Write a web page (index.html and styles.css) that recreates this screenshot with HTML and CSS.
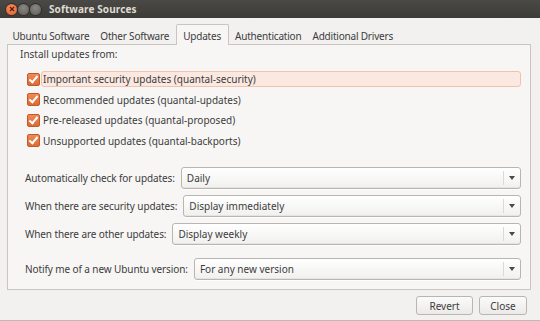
FILE: index.html
```html
<!DOCTYPE html>
<html lang="en">
<head>
<meta charset="UTF-8">
<title>Software Sources</title>
<link rel="stylesheet" href="styles.css">
</head>
<body>

<div class="window">
	<div class="titlebar">
		<div class="wm-buttons">
			<span class="wm-btn wm-close">
				<svg width="6" height="6" viewBox="0 0 6 6"><path d="M1 1L5 5M5 1L1 5" stroke="#5a1a08" stroke-width="1.3"/></svg>
			</span>
			<span class="wm-btn wm-min"></span>
			<span class="wm-btn wm-max"></span>
		</div>
		<div class="title">Software Sources</div>
	</div>

	<div class="tabs">
		<div class="tab">Ubuntu Software</div>
		<div class="tab">Other Software</div>
		<div class="tab active">Updates</div>
		<div class="tab">Authentication</div>
		<div class="tab">Additional Drivers</div>
	</div>

	<div class="panel">
		<div class="section-title">Install updates from:</div>
		<div class="checks">
			<div class="check focus"><span class="box"></span><span class="check-label">Important security updates (quantal-security)</span></div>
			<div class="check"><span class="box"></span><span class="check-label">Recommended updates (quantal-updates)</span></div>
			<div class="check"><span class="box"></span><span class="check-label">Pre-released updates (quantal-proposed)</span></div>
			<div class="check"><span class="box"></span><span class="check-label">Unsupported updates (quantal-backports)</span></div>
		</div>

		<div class="options">
			<div class="option">
				<span class="option-label">Automatically check for updates:</span>
				<div class="combo"><span class="combo-value">Daily</span><span class="combo-arrow"></span></div>
			</div>
			<div class="option">
				<span class="option-label">When there are security updates:</span>
				<div class="combo"><span class="combo-value">Display immediately</span><span class="combo-arrow"></span></div>
			</div>
			<div class="option">
				<span class="option-label">When there are other updates:</span>
				<div class="combo"><span class="combo-value">Display weekly</span><span class="combo-arrow"></span></div>
			</div>
		</div>

		<div class="option notify">
			<span class="option-label">Notify me of a new Ubuntu version:</span>
			<div class="combo"><span class="combo-value">For any new version</span><span class="combo-arrow"></span></div>
		</div>
	</div>

	<div class="actions">
		<button class="btn btn-revert">Revert</button>
		<button class="btn btn-close">Close</button>
	</div>
</div>

</body>
</html>
```
FILE: styles.css
```css
html, body {
	margin: 0;
	padding: 0;
}
body {
	width: 540px;
	height: 321px;
	overflow: hidden;
	background: #f2f1f0;
	font-family: "Noto Sans", "DejaVu Sans", sans-serif;
	font-size: 10px;
	color: #3c3c3c;
}

.window {
	height: 320px;
	border-bottom: 1px solid #bcbab6;
	display: flex;
	flex-direction: column;
}

/* title bar */
.titlebar {
	height: 18px;
	background: linear-gradient(#4a4945, #3c3b37);
	display: flex;
	align-items: center;
	flex-shrink: 0;
}
.wm-buttons {
	display: flex;
	gap: 1px;
	padding-left: 6px;
}
.wm-btn {
	width: 11px;
	height: 11px;
	border-radius: 50%;
	display: flex;
	align-items: center;
	justify-content: center;
}
.wm-close {
	background: radial-gradient(circle at 50% 35%, #f7925e, #e05a2c);
	box-shadow: 0 0 0 1px #2f2e2b;
}
.wm-min, .wm-max {
	background: radial-gradient(circle at 50% 35%, #8a8883, #5c5b56);
	box-shadow: 0 0 0 1px #2f2e2b;
}
.title {
	margin-left: 8px;
	font-weight: bold;
	font-size: 10px;
	color: #dfdbd2;
	letter-spacing: 0.1px;
}

/* tabs */
.tabs {
	display: flex;
	align-items: flex-end;
	height: 26px;
	padding-left: 7px;
	flex-shrink: 0;
	letter-spacing: -0.2px;
}
.tab {
	padding: 0 5.5px 0;
	line-height: 15px;
}
.tab.active {
	background: #f7f6f5;
	border: 1px solid #c9c6c2;
	border-bottom: none;
	border-radius: 2px 2px 0 0;
	padding: 4px 6.5px 1px;
	margin: 0 1px -1px;
	position: relative;
	z-index: 1;
}

/* notebook page */
.panel {
	margin: 0 9px 0 7px;
	height: 246px;
	background: #f7f6f5;
	border: 1px solid #c9c6c2;
	box-sizing: border-box;
	padding: 1px 9px 0 12px;
	display: flex;
	flex-direction: column;
	flex-shrink: 0;
}
.section-title {
	line-height: 14px;
	margin-top: 1px;
}
.checks {
	display: flex;
	flex-direction: column;
	gap: 4.6px;
	margin-top: 10px;
	padding-left: 7px;
}
.check {
	display: flex;
	align-items: center;
	height: 16px;
}
.box {
	width: 11px;
	height: 11px;
	border-radius: 2px;
	background: linear-gradient(#f08a55, #dd6a35);
	border: 1px solid #bf5a2b;
	flex-shrink: 0;
	position: relative;
}
.box::after {
	content: "";
	position: absolute;
	left: 3px;
	top: 0px;
	width: 3px;
	height: 7px;
	border: solid #fff;
	border-width: 0 2px 2px 0;
	transform: rotate(40deg);
}
.check-label {
	margin-left: 1px;
	padding: 0 1px;
	line-height: 14px;
	border: 1px solid transparent;
}
.check.focus .check-label {
	flex: 1;
	background: #fbe8e0;
	border-color: #efc3b1;
	border-radius: 3px;
}

.options {
	display: flex;
	flex-direction: column;
	gap: 6px;
	margin-top: 18px;
}
.option {
	display: flex;
	align-items: center;
	padding-left: 5px;
}
.option-label {
	margin-right: 6px;
	white-space: nowrap;
	letter-spacing: -0.1px;
}
.notify {
	margin-top: 13px;
}
.combo {
	flex: 1;
	height: 20px;
	border: 1px solid #b9b6b2;
	border-radius: 3px;
	background: linear-gradient(#ffffff, #f1f0ef);
	box-shadow: 0 1px 0 rgba(255,255,255,0.8), inset 0 -1px 0 #e6e4e2;
	display: flex;
	align-items: center;
	padding-left: 5px;
}
.combo-value {
	flex: 1;
	color: #3c3c3c;
}
.combo-arrow {
	width: 16px;
	height: 14px;
	border-left: 1px solid #dcdad7;
	position: relative;
}
.combo-arrow::after {
	content: "";
	position: absolute;
	left: 5px;
	top: 5px;
	border-left: 3px solid transparent;
	border-right: 3px solid transparent;
	border-top: 4px solid #4a4a4a;
}

/* dialog buttons */
.actions {
	display: flex;
	justify-content: flex-end;
	gap: 6px;
	padding: 6px 13px 0 0;
}
.btn {
	font-family: inherit;
	font-size: 10px;
	color: #3c3c3c;
	height: 19px;
	padding: 0;
	border: 1px solid #b9b6b2;
	border-radius: 3px;
	background: linear-gradient(#fbfbfa, #ebeae8);
}
.btn-revert {
	width: 57px;
}
.btn-close {
	width: 48px;
}
```
